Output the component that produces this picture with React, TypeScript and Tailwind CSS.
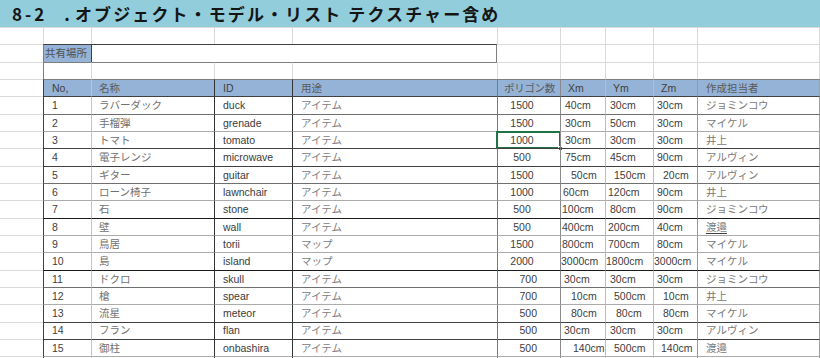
const GRID = "grid grid-cols-[43px_48px_123px_78px_205px_63px_45px_48px_44px_122px_1fr] h-[17.33px]";

// left border of each column in the table
const VL = [
  "",
  "border-l border-l-[#404040]",
  "border-l border-l-[#c4c4c4]",
  "border-l border-l-[#333333]",
  "border-l border-l-[#333333]",
  "border-l border-l-[#7a7a7a]",
  "border-l border-l-[#8a8a8a]",
  "border-l border-l-[#bdbdbd]",
  "border-l border-l-[#bdbdbd]",
  "border-l border-l-[#9a9a9a]",
  "border-l border-l-[#a0a0a0]",
];

const HT: Record<string, string> = {
  k: "border-t border-t-[#1a1a1a]",
  d: "border-t border-t-[#404040]",
  m: "border-t border-t-[#6f6f6f]",
  l: "border-t border-t-[#ababab]",
};

const PL: Record<number, string> = {
  0: "pl-0",
  1: "pl-[1px]",
  2: "pl-[2px]",
  3: "pl-[3px]",
  4: "pl-[4px]",
  7: "pl-[7px]",
  8: "pl-[8px]",
  9: "pl-[9px]",
  10: "pl-[10px]",
  12: "pl-[12px]",
};

const GRIDLINE = "border-t border-t-[#dadada]";
const GRIDLINE_L = "border-l border-l-[#dadada]";

type Row = {
  no: number;
  name: string;
  id: string;
  use: string;
  poly: string;
  x: string;
  y: string;
  z: string;
  who: string;
  top: string;
  px: number;
  py: number;
  pz: number;
};

const rows: Row[] = [
  { no: 1, name: "ラバーダック", id: "duck", use: "アイテム", poly: "1500", x: "40cm", y: "30cm", z: "30cm", who: "ジョミンコウ", top: "d", px: 4, py: 4, pz: 3 },
  { no: 2, name: "手榴弾", id: "grenade", use: "アイテム", poly: "1500", x: "30cm", y: "50cm", z: "30cm", who: "マイケル", top: "m", px: 4, py: 4, pz: 3 },
  { no: 3, name: "トマト", id: "tomato", use: "アイテム", poly: "1000", x: "30cm", y: "30cm", z: "30cm", who: "井上", top: "l", px: 4, py: 4, pz: 3 },
  { no: 4, name: "電子レンジ", id: "microwave", use: "アイテム", poly: "500", x: "75cm", y: "45cm", z: "90cm", who: "アルヴィン", top: "d", px: 4, py: 4, pz: 3 },
  { no: 5, name: "ギター", id: "guitar", use: "アイテム", poly: "1500", x: "50cm", y: "150cm", z: "20cm", who: "アルヴィン", top: "d", px: 10, py: 8, pz: 9 },
  { no: 6, name: "ローン椅子", id: "lawnchair", use: "アイテム", poly: "1000", x: "60cm", y: "120cm", z: "90cm", who: "井上", top: "m", px: 2, py: 2, pz: 3 },
  { no: 7, name: "石", id: "stone", use: "アイテム", poly: "500", x: "100cm", y: "80cm", z: "90cm", who: "ジョミンコウ", top: "l", px: 1, py: 4, pz: 3 },
  { no: 8, name: "壁", id: "wall", use: "アイテム", poly: "500", x: "400cm", y: "200cm", z: "40cm", who: "渡邉", top: "k", px: 1, py: 2, pz: 3 },
  { no: 9, name: "鳥居", id: "torii", use: "マップ", poly: "1500", x: "800cm", y: "700cm", z: "80cm", who: "マイケル", top: "l", px: 1, py: 2, pz: 3 },
  { no: 10, name: "島", id: "island", use: "マップ", poly: "2000", x: "3000cm", y: "1800cm", z: "3000cm", who: "マイケル", top: "l", px: 0, py: 0, pz: 0 },
  { no: 11, name: "ドクロ", id: "skull", use: "アイテム", poly: "700", x: "30cm", y: "30cm", z: "30cm", who: "ジョミンコウ", top: "k", px: 3, py: 4, pz: 3 },
  { no: 12, name: "槍", id: "spear", use: "アイテム", poly: "700", x: "10cm", y: "500cm", z: "10cm", who: "井上", top: "m", px: 10, py: 8, pz: 9 },
  { no: 13, name: "流星", id: "meteor", use: "アイテム", poly: "500", x: "80cm", y: "80cm", z: "80cm", who: "マイケル", top: "l", px: 10, py: 10, pz: 9 },
  { no: 14, name: "フラン", id: "flan", use: "アイテム", poly: "500", x: "30cm", y: "30cm", z: "30cm", who: "アルヴィン", top: "d", px: 3, py: 4, pz: 3 },
  { no: 15, name: "御柱", id: "onbashira", use: "アイテム", poly: "500", x: "140cm", y: "500cm", z: "140cm", who: "渡邉", top: "d", px: 12, py: 8, pz: 7 },
];

function EmptyRow() {
  return (
    <div className={GRID}>
      {VL.map((_, i) => (
        <div key={i} className={`${GRIDLINE} ${i > 0 ? GRIDLINE_L : ""}`} />
      ))}
    </div>
  );
}

function Cell({ col, top, className = "", children }: { col: number; top: string; className?: string; children?: React.ReactNode }) {
  return (
    <div className={`relative flex items-center whitespace-nowrap leading-none ${VL[col]} ${top} ${className}`}>
      {children}
    </div>
  );
}

export default function App() {
  return (
    <div className="w-[820px] h-[358px] overflow-hidden bg-white text-[10.5px] font-['Liberation_Sans','Noto_Sans_CJK_JP',sans-serif] text-[#404040]">
      {/* title bar */}
      <div className="h-[27px] bg-[#92cddc] flex items-center pl-[12px] font-['Noto_Sans_CJK_JP',sans-serif] font-bold text-[17px] text-[#151515] tracking-[2.1px] whitespace-nowrap">
        <span className="tracking-[3px]">8-2</span>
        <span className="ml-[17px] mr-[3px]">.</span>
        <span>オブジェクト・モデル・リスト テクスチャー含め</span>
      </div>

      <EmptyRow />

      {/* shared place */}
      <div className={GRID}>
        <div className={GRIDLINE} />
        <div className="flex items-center pl-[1px] bg-[#95b3d7] border-t border-t-[#404040] border-l border-l-[#7f7f7f] text-[#505050] leading-none">
          共有場所
        </div>
        <div className="col-span-3 border-t border-t-[#404040] border-l border-l-[#404040] border-r border-r-[#7f7f7f]" />
        {[6, 7, 8, 9, 10, 11].map((i) => (
          <div key={i} className={`${GRIDLINE} ${i > 6 ? GRIDLINE_L : ""}`} />
        ))}
      </div>

      <div className={GRID}>
        <div className={GRIDLINE} />
        {[1, 2, 3, 4].map((i) => (
          <div key={i} className={`border-t border-t-[#7f7f7f] ${i > 1 ? GRIDLINE_L : "border-l border-l-[#7f7f7f]"}`} />
        ))}
        {[5, 6, 7, 8, 9, 10].map((i) => (
          <div key={i} className={`${GRIDLINE} ${GRIDLINE_L}`} />
        ))}
      </div>

      {/* header */}
      <div className={GRID}>
        <div className={GRIDLINE} />
        <Cell col={1} top="border-t border-t-[#7f7f7f]" className="bg-[#95b3d7] pl-[8px]">No,</Cell>
        <Cell col={2} top="border-t border-t-[#7f7f7f]" className="bg-[#95b3d7] pl-[7px] text-[#5a5a5a]">名称</Cell>
        <Cell col={3} top="border-t border-t-[#7f7f7f]" className="bg-[#95b3d7] pl-[8px]">ID</Cell>
        <Cell col={4} top="border-t border-t-[#7f7f7f]" className="bg-[#95b3d7] pl-[8px] text-[#5a5a5a]">用途</Cell>
        <Cell col={5} top="border-t border-t-[#7f7f7f]" className="bg-[#95b3d7] pl-[6px] text-[#5a5a5a] tracking-[-0.3px]">ポリゴン数</Cell>
        <Cell col={6} top="border-t border-t-[#7f7f7f]" className="bg-[#95b3d7] pl-[7px]">Xm</Cell>
        <Cell col={7} top="border-t border-t-[#7f7f7f]" className="bg-[#95b3d7] pl-[7px]">Ym</Cell>
        <Cell col={8} top="border-t border-t-[#7f7f7f]" className="bg-[#95b3d7] pl-[7px]">Zm</Cell>
        <Cell col={9} top="border-t border-t-[#7f7f7f]" className="bg-[#95b3d7] pl-[8px] text-[#5a5a5a]">作成担当者</Cell>
        <Cell col={10} top="border-t border-t-[#7f7f7f]" />
      </div>

      {/* body */}
      {rows.map((r) => {
        const t = HT[r.top];
        return (
          <div key={r.no} className={GRID}>
            <div className={GRIDLINE} />
            <Cell col={1} top={t} className="pl-[8px]">{r.no}</Cell>
            <Cell col={2} top={t} className="pl-[7px] text-[#707070]">{r.name}</Cell>
            <Cell col={3} top={t} className="pl-[8px] text-[#3a3a3a]">{r.id}</Cell>
            <Cell col={4} top={t} className="pl-[8px] text-[#808080]">{r.use}</Cell>
            <Cell col={5} top={t} className={r.no > 10 ? "justify-end pr-[23px]" : "justify-center pr-[14px]"}>
              {r.poly}
              {r.no === 3 && (
                <>
                  <div className="absolute -left-[2px] -top-[1px] -right-[1px] -bottom-[1px] border-2 border-[#217346]" />
                  <div className="absolute -right-[3px] -bottom-[3px] w-[5px] h-[5px] bg-[#217346] border border-white" />
                </>
              )}
            </Cell>
            <Cell col={6} top={t} className={`${PL[r.px]} overflow-hidden`}>{r.x}</Cell>
            <Cell col={7} top={t} className={`${PL[r.py]} overflow-hidden`}>{r.y}</Cell>
            <Cell col={8} top={t} className={`${PL[r.pz]} overflow-hidden`}>{r.z}</Cell>
            <Cell col={9} top={t} className="pl-[8px] text-[#787878]">
              <span className={r.no === 8 ? "underline decoration-[#404040] underline-offset-2" : ""}>{r.who}</span>
            </Cell>
            <Cell col={10} top={t} />
          </div>
        );
      })}

      <div className={GRID}>
        <div className={GRIDLINE} />
        {[1, 2, 3, 4, 5, 6, 7, 8, 9, 10].map((i) => (
          <Cell key={i} col={i} top={HT.l} />
        ))}
      </div>
    </div>
  );
}
